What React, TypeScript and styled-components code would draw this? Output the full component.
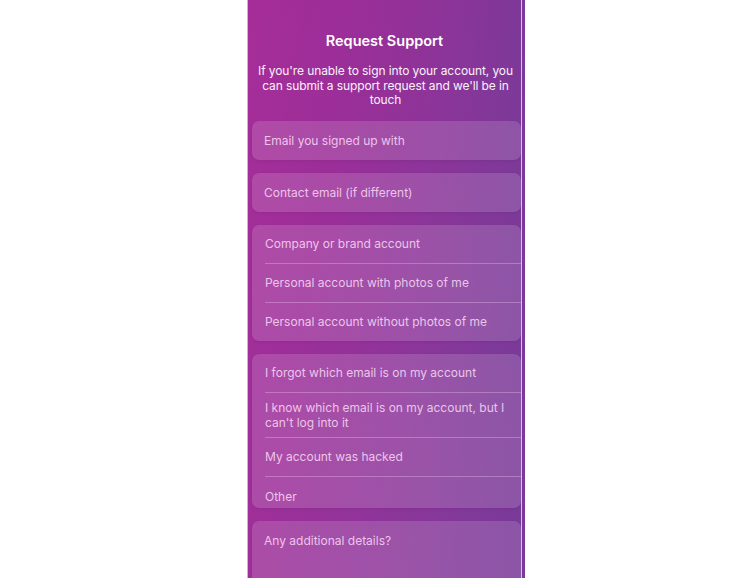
import styled, { createGlobalStyle } from 'styled-components';

const GlobalStyle = createGlobalStyle`
  html, body {
    margin: 0;
    padding: 0;
    background: #ffffff;
  }
  body {
    font-family: Inter, "Noto Sans", "Liberation Sans", sans-serif;
    -webkit-font-smoothing: antialiased;
  }
`;

const accountTypes = [
  'Company or brand account',
  'Personal account with photos of me',
  'Personal account without photos of me',
];

const problems = [
  'I forgot which email is on my account',
  "I know which email is on my account, but I can't log into it",
  'My account was hacked',
];

export default function App() {
  return (
    <>
      <GlobalStyle />
      <Page>
        <Phone>
          <Screen>
            <Title>Request Support</Title>
            <Intro>
              If you're unable to sign into your account, you can submit a support request and
              we'll be in touch
            </Intro>
            <Form>
              <Field>
                <FieldText>Email you signed up with</FieldText>
              </Field>
              <Field>
                <FieldText>Contact email (if different)</FieldText>
              </Field>
              <Group>
                {accountTypes.map((label) => (
                  <Option key={label}>{label}</Option>
                ))}
              </Group>
              <Group>
                {problems.map((label) => (
                  <Option key={label}>{label}</Option>
                ))}
                <Option $short>Other</Option>
              </Group>
              <Details>
                <FieldText>Any additional details?</FieldText>
              </Details>
            </Form>
          </Screen>
        </Phone>
      </Page>
    </>
  );
}

const Page = styled.div`
  display: flex;
  width: 750px;
  height: 583px;
  padding-left: 247px;
  box-sizing: border-box;
  background: #ffffff;
`;

const Phone = styled.div`
  display: flex;
  height: 578px;
  border-left: 1px solid #d9a9e0;
  border-right: 3px solid #7a3a9c;
  overflow: hidden;
`;

const Screen = styled.div`
  width: 273px;
  border-right: 1px solid #e3b9ef;
  display: flex;
  flex-direction: column;
  align-items: stretch;
  background:
    linear-gradient(180deg, rgba(120, 40, 140, 0) 0%, rgba(170, 55, 160, 0.22) 100%),
    linear-gradient(100deg, #a62d99 0%, #9a2e98 30%, #8b3499 55%, #793a98 80%, #6c3b96 100%);
  color: #ffffff;
  overflow: hidden;
`;

const Title = styled.h1`
  margin: 31px 0 0;
  font-size: 14.5px;
  font-weight: 600;
  line-height: 20px;
  text-align: center;
`;

const Intro = styled.p`
  margin: 13px 0 0 2px;
  font-size: 12px;
  line-height: 14.5px;
  text-align: center;
  letter-spacing: -0.1px;
  color: #fbf1fb;
`;

const Form = styled.div`
  display: flex;
  flex-direction: column;
  gap: 13px;
  margin-top: 13px;
  padding-left: 4px;
  flex: 1;
`;

const Card = styled.div`
  background: rgba(255, 255, 255, 0.14);
  border-radius: 7px;
  box-shadow: 0 1px 3px rgba(80, 10, 90, 0.12);
`;

const Field = styled(Card)`
  height: 39px;
  display: flex;
  align-items: center;
  padding-left: 12px;
`;

const FieldText = styled.span`
  font-size: 12px;
  line-height: 15px;
  color: rgba(255, 224, 252, 0.82);
`;

const Group = styled(Card)`
  display: flex;
  flex-direction: column;
  padding-left: 13px;
`;

const Option = styled.div<{ $short?: boolean }>`
  display: flex;
  align-items: ${({ $short }) => ($short ? 'flex-start' : 'center')};
  min-height: ${({ $short }) => ($short ? '19px' : '24px')};
  padding: ${({ $short }) => ($short ? '12px 12px 0 0' : '7px 12px 7px 0')};
  font-size: 12px;
  line-height: 15px;
  color: rgba(255, 224, 252, 0.82);
  border-bottom: 1px solid rgba(255, 220, 255, 0.3);

  &:last-child {
    border-bottom: none;
  }
`;

const Details = styled(Card)`
  flex: 1;
  font-size: 12px;
  line-height: 15px;
  padding: 12px 0 0 12px;
  border-radius: 7px 7px 0 0;
`;
